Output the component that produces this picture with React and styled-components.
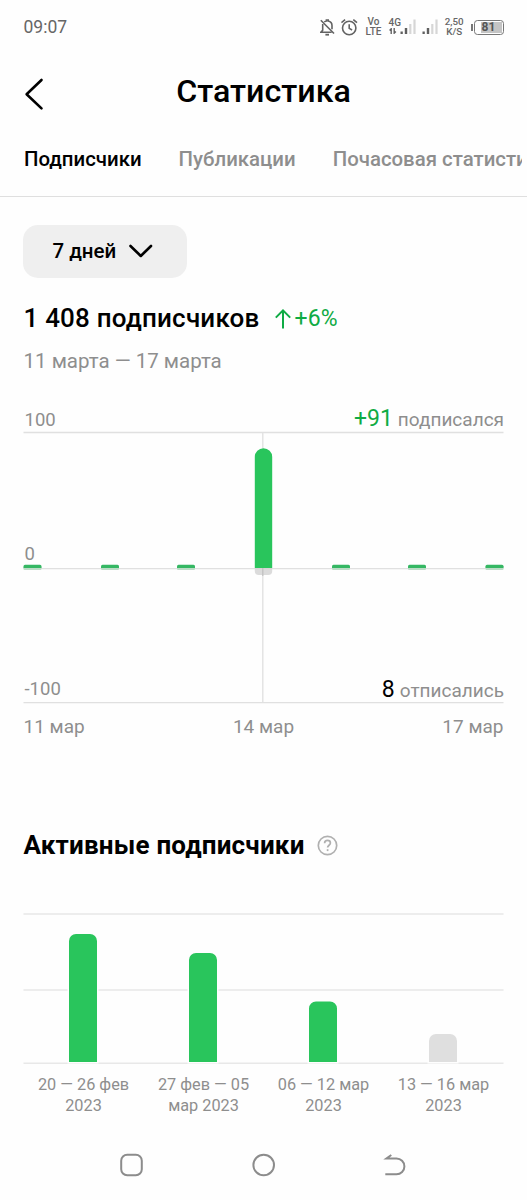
import React from "react";
import styled, { createGlobalStyle } from "styled-components";

const GlobalStyle = createGlobalStyle`
	* {
		box-sizing: border-box;
	}

	body {
		margin: 0;
		background: #fefefe;
		color: #000;
		font-family: Roboto, "Noto Sans", sans-serif;
	}
`;

const Screen = styled.div`
	display: flex;
	flex-direction: column;
	width: 527px;
	height: 1200px;
	overflow: hidden;
	background: #fefefe;
`;

const StatusBar = styled.div`
	display: flex;
	align-items: center;
	justify-content: space-between;
	height: 54px;
	padding: 0 23.5px;
	color: #666;
`;

const Clock = styled.span`
	font-size: 17.5px;
`;

const StatusIcons = styled.div`
	display: flex;
	align-items: center;
	gap: 6px;
	height: 20px;

	svg {
		flex: none;
		display: block;
	}
`;

const StackedText = styled.div`
	width: ${(props) => props.$width}px;
	font-size: ${(props) => props.$size}px;
	font-weight: 500;
	line-height: 10px;
	text-align: center;
	white-space: nowrap;
`;

const Network = styled.div`
	display: flex;
	align-items: flex-end;
	width: 27.5px;
	height: 16px;
`;

const NetworkType = styled.div`
	display: flex;
	flex-direction: column;
	width: 11.5px;
	height: 17px;
	font-size: 10px;
	font-weight: 500;
	line-height: 10px;
`;

const Battery = styled.div`
	display: flex;
	align-items: center;
	width: 33px;
	height: 16px;

	&::before {
		content: "";
		width: 2px;
		height: 7px;
		margin-right: 1px;
		background: #777;
	}
`;

const BatteryBody = styled.div`
	display: flex;
	flex: 1;
	height: 15px;
	padding: 1px;
	border: 1.3px solid #777;
	border-radius: 3.5px;
`;

const BatteryLevel = styled.div`
	display: flex;
	align-items: center;
	justify-content: center;
	flex: 1;
	margin-left: 5px;
	padding-right: 5px;
	background: #c4c4c4;
	color: #555;
	font-size: 12px;
	font-weight: 700;
	line-height: 11px;
`;

const Header = styled.header`
	display: grid;
	grid-template-columns: 60px 1fr 60px;
	align-items: center;
	height: 75px;

	svg {
		margin: 4px 0 0 23px;
	}
`;

const Title = styled.h1`
	margin: 0;
	padding-bottom: 2px;
	font-size: 32.2px;
	font-weight: 500;
	line-height: 40px;
	text-align: center;
`;

const Tabs = styled.nav`
	display: flex;
	align-items: center;
	height: 68px;
	padding: 0 0 8px 24px;
	border-bottom: 1.5px solid #dfdfdf;
`;

const TabStrip = styled.div`
	display: flex;
	gap: 37px;
	width: 498px;
	overflow: hidden;
`;

const Tab = styled.span`
	flex: none;
	color: ${(props) => (props.$active ? "#000" : "#8e8e8e")};
	font-size: 20.4px;
	font-weight: 500;
	line-height: 28px;
	white-space: nowrap;
`;

const Content = styled.main`
	display: flex;
	flex-direction: column;
	padding: 28px 23.5px 0 23px;
`;

const PeriodButton = styled.button`
	display: flex;
	align-items: center;
	gap: 13px;
	width: 164px;
	height: 53px;
	padding: 0 0 1px 29.5px;
	border: 0;
	border-radius: 15px;
	background: #efefef;
	color: #000;
	font: 500 20.5px Roboto, "Noto Sans", sans-serif;
`;

const Summary = styled.div`
	display: flex;
	align-items: center;
	margin-top: 25px;
	padding-left: 0.5px;
	height: 30px;
	font-size: 26px;
	font-weight: 500;
	line-height: 30px;
	letter-spacing: 0.2px;
	white-space: nowrap;
`;

const Growth = styled.span`
	display: flex;
	align-items: center;
	gap: 3.5px;
	margin-left: 15.5px;
	padding-top: 2px;
	color: #0fab44;
	font-size: 23px;
	font-weight: 400;
`;

const DateRange = styled.div`
	margin-top: 16px;
	padding-left: 0.5px;
	color: #8e8e8e;
	font-size: 20.5px;
	line-height: 24px;
`;

/* labels and the drawing share one grid cell */
const Chart = styled.div`
	display: grid;
	margin-top: 32px;

	> * {
		grid-area: 1 / 1;
	}
`;

const ChartLabels = styled.div`
	display: flex;
	flex-direction: column;
	justify-content: space-between;
	height: 298px;
`;

const LabelRow = styled.div`
	display: flex;
	align-items: flex-start;
	justify-content: space-between;
	height: 27px;
	padding-left: 1.5px;
	color: #8e8e8e;
	font-size: 19px;
	line-height: 27px;
`;

const Mark = styled.span`
	font-size: 18.5px;
	line-height: ${(props) => props.$line}px;
`;

const Count = styled.b`
	margin-right: 5px;
	color: ${(props) => props.$color};
	font-size: 23px;
	font-weight: 400;
`;

const Axis = styled.div`
	display: flex;
	justify-content: space-between;
	margin-top: 9px;
	padding-left: 0.5px;
	color: #8e8e8e;
	font-size: 19px;
	line-height: 28px;
`;

const SectionTitle = styled.h2`
	display: flex;
	align-items: center;
	gap: 12.5px;
	margin: 89px 0 0;
	padding-left: 0.5px;
	height: 30px;
	font-size: 26px;
	font-weight: 700;
	letter-spacing: 0.2px;
	white-space: nowrap;
`;

const WeekChart = styled.svg`
	display: block;
	margin-top: 51px;
`;

const Weeks = styled.div`
	display: grid;
	grid-template-columns: repeat(4, 120px);
	margin-top: 11px;
	padding-left: 0.5px;
	color: #8e8e8e;
	font-size: 16.3px;
	line-height: 20.5px;
	text-align: center;
	white-space: pre-line;
`;

const NavBar = styled.footer`
	display: flex;
	justify-content: space-between;
	width: 287px;
	margin: 37px 0 0 120px;
`;

const days = [9, 86.5, 162.5, 240, 317.5, 393.5, 471];

const weeks = [
	{ label: "20 — 26 фев\n2023", height: 128, color: "#29c55c" },
	{ label: "27 фев — 05\nмар 2023", height: 109, color: "#29c55c" },
	{ label: "06 — 12 мар\n2023", height: 60.5, color: "#29c55c" },
	{ label: "13 — 16 мар\n2023", height: 28, color: "#dfdfdf" },
];

function Signal() {
	return (
		<svg width="16" height="16" viewBox="0 0 16 16">
			<path d="M.5 12.5h2.3V15H.5zM4.8 9h2.4v6H4.8z" fill="#5f5f5f" />
			<path d="M9.2 5h2.2v10H9.2zM13.4.5h2.2V15h-2.2z" fill="#d6d6d6" />
		</svg>
	);
}

function BellOff() {
	return (
		<svg width="15" height="17" viewBox="0 0 15 17" fill="none" stroke="#626262" strokeWidth="1.6">
			<path d="M.8 1.3 14 14.5" />
			<path d="M4.3 3C5 2.4 5.8 2.1 6.4 2V1h1.8v1c2.5.5 3.8 2.4 3.8 4.6v3.6M2.7 5v6.3L1 13.2h10.7" />
			<path d="M5.4 15.7h3.6" strokeWidth="1.8" />
		</svg>
	);
}

function Alarm() {
	return (
		<svg width="17.5" height="17" viewBox="0 0 17.5 17" fill="none" stroke="#626262" strokeWidth="1.6">
			<circle cx="8.2" cy="9" r="6.7" />
			<path d="M8.2 5.2v4.2l2.9 1.6M.4 3.6 4.1.6M16 3.6 12.3.6" />
		</svg>
	);
}

function SubscribersChart() {
	return (
		<svg width="481" height="299" viewBox="-0.5 0 481 299">
			<path d="M0 27.5h480M0 163.7h480M0 297.7h480M239.3 28v270" stroke="#e0e0e0" strokeWidth="1.3" />
			{days.map((x) =>
				x === 240 ? (
					<g key={x}>
						<path d="M231.3 163v-111a8.7 8.7 0 0 1 17.4 0v111z" fill="#29c55c" />
						<path d="M231.3 163h17.4v3a4 4 0 0 1-4 4h-9.4a4 4 0 0 1-4-4z" fill="#d2d2d2" fillOpacity=".8" />
						<path d="M239.3 163v8" stroke="#bdbdbd" />
					</g>
				) : (
					<g key={x}>
						<rect x={x - 9} y="161.5" width="18" height="3.5" rx="1.2" fill="#bcdcc6" />
						<path d={`M${x - 9} 163v-1.7a1.5 1.5 0 0 1 1.5-1.5h15a1.5 1.5 0 0 1 1.5 1.5v1.7z`} fill="#35b763" />
					</g>
				)
			)}
		</svg>
	);
}

export default function App() {
	return (
		<Screen>
			<GlobalStyle />
			<StatusBar>
				<Clock>09:07</Clock>
				<StatusIcons>
					<BellOff />
					<Alarm />
					<StackedText $width={18} $size={10}>
						Vo
						<br />
						LTE
					</StackedText>
					<Network>
						<NetworkType>
							4G
							<svg width="8" height="6" viewBox="0 0 8 6" fill="none" stroke="#626262" strokeWidth="1.4">
								<path d="M2.2 6V.8L.6 2.5M5.2 0v5.2l1.7-1.7" />
							</svg>
						</NetworkType>
						<Signal />
					</Network>
					<Signal />
					<StackedText $width={20.5} $size={9.8}>
						2,50
						<br />
						K/S
					</StackedText>
					<Battery>
						<BatteryBody>
							<BatteryLevel>81</BatteryLevel>
						</BatteryBody>
					</Battery>
				</StatusIcons>
			</StatusBar>

			<Header>
				<svg width="22" height="34" viewBox="0 0 22 34" fill="none" stroke="#000" strokeWidth="2.6" strokeLinecap="round" strokeLinejoin="round">
					<path d="M18.5 3 3.6 17.2 18.5 31.4" />
				</svg>
				<Title>Статистика</Title>
			</Header>

			<Tabs>
				<TabStrip>
					<Tab $active>Подписчики</Tab>
					<Tab>Публикации</Tab>
					<Tab>Почасовая статистика</Tab>
				</TabStrip>
			</Tabs>

			<Content>
				<PeriodButton>
					7 дней
					<svg width="24" height="14" viewBox="0 0 24 14" fill="none" stroke="#000" strokeWidth="2.6" strokeLinecap="round" strokeLinejoin="round">
						<path d="m1.5 2 10.3 10L22 2" />
					</svg>
				</PeriodButton>

				<Summary>
					1 408 подписчиков
					<Growth>
						<svg width="16" height="20" viewBox="0 0 16 20" fill="none" stroke="#0fab44" strokeWidth="2">
							<path d="M8 19.5V1.5M.8 8.6 8 1.4l7.2 7.2" />
						</svg>
						+6%
					</Growth>
				</Summary>
				<DateRange>11 марта — 17 марта</DateRange>

				<Chart>
					<SubscribersChart />
					<ChartLabels>
						<LabelRow>
							<Mark $line={30}>100</Mark>
							<span>
								<Count $color="#0fab44">+91</Count>
								подписался
							</span>
						</LabelRow>
						<LabelRow>
							<Mark $line={26}>0</Mark>
						</LabelRow>
						<LabelRow>
							<Mark $line={27}>-100</Mark>
							<span>
								<Count $color="#000">8</Count>
								отписались
							</span>
						</LabelRow>
					</ChartLabels>
				</Chart>
				<Axis>
					<span>11 мар</span>
					<span>14 мар</span>
					<span>17 мар</span>
				</Axis>

				<SectionTitle>
					Активные подписчики
					<svg width="21" height="21" viewBox="0 0 21 21" fill="none" stroke="#b0b0b0" strokeWidth="1.7">
						<circle cx="10.5" cy="10.5" r="9.2" />
						<path d="M7.6 8.3c0-1.8 1.2-2.9 2.9-2.9s2.9 1 2.9 2.6c0 2.2-2.8 2.3-2.8 4.6" />
						<path d="M10.6 14.2v1.9" />
					</svg>
				</SectionTitle>

				<WeekChart width="481" height="153" viewBox="-0.5 0 481 153">
					<path d="M0 3h480M0 79h480M0 152.3h480" stroke="#e8e8e8" strokeWidth="1.7" />
					{weeks.map((week, i) => {
						const x = 45.5 + i * 120;
						return (
							<path
								key={week.label}
								d={`M${x} 151v${7 - week.height}a7 7 0 0 1 7-7h14a7 7 0 0 1 7 7V151z`}
								fill={week.color}
								stroke="#fefefe"
								strokeWidth="3"
								paintOrder="stroke"
							/>
						);
					})}
				</WeekChart>
				<Weeks>
					{weeks.map((week) => (
						<span key={week.label}>{week.label}</span>
					))}
				</Weeks>
			</Content>

			<NavBar>
				<svg width="24" height="24" viewBox="0 0 24 24" fill="none" stroke="#8c8c8c" strokeWidth="2">
					<rect x="1.2" y="1.7" width="20.6" height="20.6" rx="6" />
				</svg>
				<svg width="24" height="24" viewBox="0 0 24 24" fill="none" stroke="#8c8c8c" strokeWidth="2">
					<circle cx="11.7" cy="12" r="10.3" />
				</svg>
				<svg width="24" height="24" viewBox="0 0 24 24" fill="none" stroke="#8c8c8c" strokeWidth="2">
					<path d="M2.3 21.3h11.2a7.9 7.9 0 0 0 0-15.8H3.4L8.3 2" />
				</svg>
			</NavBar>
		</Screen>
	);
}
